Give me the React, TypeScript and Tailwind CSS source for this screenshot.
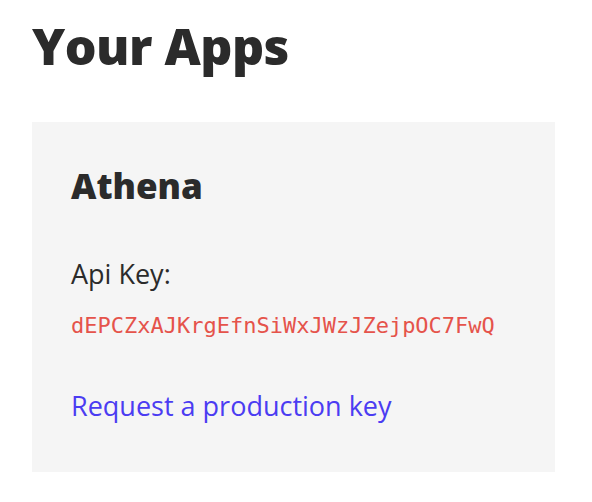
export default function App() {
  return (
    <div className="min-h-screen bg-white px-8 pt-[14px] font-['Open_Sans',sans-serif] text-[#2b2b2b]">
      <h1 className="text-[50px] font-extrabold leading-[64px] tracking-[-0.5px]">Your Apps</h1>

      <section className="mt-[44px] w-[523px] bg-[#f5f5f5] px-[39px] pt-[42px] pb-[48px]">
        <h2 className="text-[35px] font-extrabold leading-[44px]">Athena</h2>

        <div className="mt-[48px]">
          <p className="text-[27px] leading-[36px]">Api Key:</p>
          <code className="mt-[20px] block font-['DejaVu_Sans_Mono',monospace] text-[22px] leading-[28px] text-[#e5534b]">
            dEPCZxAJKrgEfnSiWxJWzJZejpOC7FwQ
          </code>
        </div>

        <a href="#" className="mt-[48px] block text-[27px] leading-[36px] text-[#4b3cf2]">
          Request a production key
        </a>
      </section>
    </div>
  );
}
